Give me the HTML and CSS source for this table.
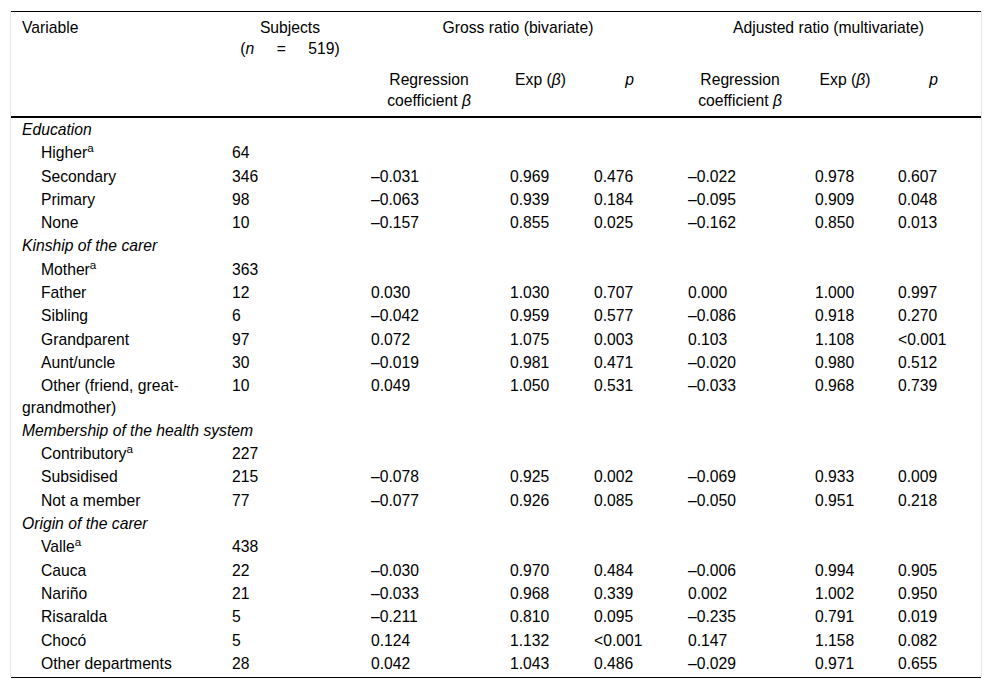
FILE: index.html
```html
<!DOCTYPE html>
<html lang="en">
<head>
<meta charset="utf-8">
<title>Table</title>
<link rel="stylesheet" href="styles.css">
</head>
<body>
<div class="frame">
  <table class="data">
    <colgroup>
      <col class="c-var"><col class="c-subj"><col class="c-reg"><col class="c-exp"><col class="c-p">
      <col class="c-reg2"><col class="c-exp2"><col class="c-p2">
    </colgroup>
    <thead>
      <tr>
        <th class="left">Variable</th>
        <th>Subjects<br>(<i>n</i> <span class="eq">=</span> 519)</th>
        <th colspan="3">Gross ratio (bivariate)</th>
        <th colspan="3">Adjusted ratio (multivariate)</th>
      </tr>
      <tr class="sub">
        <th></th>
        <th></th>
        <th><span class="ln">Regression</span><span class="ln">coefficient <i>β</i></span></th>
        <th>Exp (<i>β</i>)</th>
        <th><i>p</i></th>
        <th><span class="ln">Regression</span><span class="ln">coefficient <i>β</i></span></th>
        <th>Exp (<i>β</i>)</th>
        <th><i>p</i></th>
      </tr>
    </thead>
    <tbody>
      <tr class="group"><td colspan="8">Education</td></tr>
      <tr><td class="item">Higher<sup>a</sup></td><td>64</td><td></td><td></td><td></td><td></td><td></td><td></td></tr>
      <tr><td class="item">Secondary</td><td>346</td><td>–0.031</td><td>0.969</td><td>0.476</td><td>–0.022</td><td>0.978</td><td>0.607</td></tr>
      <tr><td class="item">Primary</td><td>98</td><td>–0.063</td><td>0.939</td><td>0.184</td><td>–0.095</td><td>0.909</td><td>0.048</td></tr>
      <tr><td class="item">None</td><td>10</td><td>–0.157</td><td>0.855</td><td>0.025</td><td>–0.162</td><td>0.850</td><td>0.013</td></tr>
      <tr class="group"><td colspan="8">Kinship of the carer</td></tr>
      <tr><td class="item">Mother<sup>a</sup></td><td>363</td><td></td><td></td><td></td><td></td><td></td><td></td></tr>
      <tr><td class="item">Father</td><td>12</td><td>0.030</td><td>1.030</td><td>0.707</td><td>0.000</td><td>1.000</td><td>0.997</td></tr>
      <tr><td class="item">Sibling</td><td>6</td><td>–0.042</td><td>0.959</td><td>0.577</td><td>–0.086</td><td>0.918</td><td>0.270</td></tr>
      <tr><td class="item">Grandparent</td><td>97</td><td>0.072</td><td>1.075</td><td>0.003</td><td>0.103</td><td>1.108</td><td>&lt;0.001</td></tr>
      <tr><td class="item">Aunt/uncle</td><td>30</td><td>–0.019</td><td>0.981</td><td>0.471</td><td>–0.020</td><td>0.980</td><td>0.512</td></tr>
      <tr><td class="item">Other (friend, great-grandmother)</td><td>10</td><td>0.049</td><td>1.050</td><td>0.531</td><td>–0.033</td><td>0.968</td><td>0.739</td></tr>
      <tr class="group"><td colspan="8">Membership of the health system</td></tr>
      <tr><td class="item">Contributory<sup>a</sup></td><td>227</td><td></td><td></td><td></td><td></td><td></td><td></td></tr>
      <tr><td class="item">Subsidised</td><td>215</td><td>–0.078</td><td>0.925</td><td>0.002</td><td>–0.069</td><td>0.933</td><td>0.009</td></tr>
      <tr><td class="item">Not a member</td><td>77</td><td>–0.077</td><td>0.926</td><td>0.085</td><td>–0.050</td><td>0.951</td><td>0.218</td></tr>
      <tr class="group"><td colspan="8">Origin of the carer</td></tr>
      <tr><td class="item">Valle<sup>a</sup></td><td>438</td><td></td><td></td><td></td><td></td><td></td><td></td></tr>
      <tr><td class="item">Cauca</td><td>22</td><td>–0.030</td><td>0.970</td><td>0.484</td><td>–0.006</td><td>0.994</td><td>0.905</td></tr>
      <tr><td class="item">Nariño</td><td>21</td><td>–0.033</td><td>0.968</td><td>0.339</td><td>0.002</td><td>1.002</td><td>0.950</td></tr>
      <tr><td class="item">Risaralda</td><td>5</td><td>–0.211</td><td>0.810</td><td>0.095</td><td>–0.235</td><td>0.791</td><td>0.019</td></tr>
      <tr><td class="item">Chocó</td><td>5</td><td>0.124</td><td>1.132</td><td>&lt;0.001</td><td>0.147</td><td>1.158</td><td>0.082</td></tr>
      <tr><td class="item">Other departments</td><td>28</td><td>0.042</td><td>1.043</td><td>0.486</td><td>–0.029</td><td>0.971</td><td>0.655</td></tr>
    </tbody>
  </table>
</div>
<div class="rule"></div>
</body>
</html>
```
FILE: styles.css
```css
html, body {
  margin: 0;
  padding: 0;
  background: #ffffff;
}

body {
  padding: 11px 10px 0 10px;
  font-family: "Liberation Sans", Arial, sans-serif;
  font-size: 15.7px;
  color: #000000;
}

.frame {
  width: 970px;
  border-left: 1px solid #e6e6e6;
  border-right: 1px solid #e6e6e6;
  padding-bottom: 2px;
}

.data {
  width: 970px;
  table-layout: fixed;
  border-collapse: collapse;
  border-top: 1px solid #000000;
}

.c-var { width: 210px; }
.c-subj { width: 139px; }
.c-reg { width: 139px; }
.c-exp { width: 84px; }
.c-p { width: 94px; }
.c-reg2 { width: 127px; }
.c-exp2 { width: 83px; }
.c-p2 { width: 94px; }

.data th,
.data td {
  padding: 0 12px 0 11px;
  vertical-align: top;
  text-align: left;
}

.data th {
  font-weight: normal;
  text-align: center;
  line-height: 21px;
  padding-top: 5px;
  padding-bottom: 5px;
}

.data th.left {
  text-align: left;
}

.data th .ln {
  display: block;
  height: 21px;
  line-height: 21px;
}

.data thead tr.sub th {
  border-bottom: 2px solid #000000;
}

.eq {
  margin: 0 18px;
}

.data td {
  line-height: 21.3px;
  padding-top: 1px;
  padding-bottom: 1px;
  white-space: nowrap;
}

.data td.item {
  white-space: normal;
  text-indent: 19px;
}

.data tr.group td {
  font-style: italic;
}

sup {
  font-size: 0.74em;
  line-height: 0;
  vertical-align: 0.55em;
}

.rule {
  width: 970px;
  margin-left: 1px;
  border-top: 1px solid #000000;
}
```
